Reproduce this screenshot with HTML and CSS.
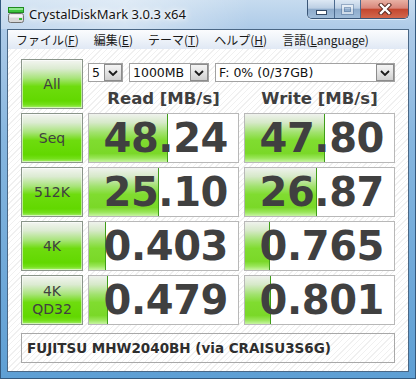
FILE: index.html
```html
<!DOCTYPE html>
<html>
<head>
<meta charset="utf-8">
<link rel="stylesheet" href="styles.css">
</head>
<body>
<div class="window">
  <div class="titlebar">
    <svg class="appicon" width="16" height="16" viewBox="0 0 16 16">
      <rect x="0.5" y="0.5" width="15" height="5" fill="#3cc43c" stroke="#1f8a1f"/>
      <rect x="1" y="1" width="14" height="2" fill="#8fe88f"/>
      <rect x="0.5" y="6.5" width="15" height="9" rx="2" fill="#d8d8d8" stroke="#707070"/>
      <rect x="1.5" y="7.5" width="13" height="3" fill="#f4f4f4"/>
      <rect x="11" y="11" width="3" height="2" fill="#30c030"/>
    </svg>
    <span class="title">CrystalDiskMark 3.0.3 x64</span>
    <div class="caps">
      <div class="cap cap-min"><span class="min-bar"></span></div>
      <div class="cap cap-max"><span class="max-box"></span></div>
      <div class="cap cap-close">
        <svg width="14" height="12" viewBox="0 0 14 12">
          <path d="M3 2 L11 10 M11 2 L3 10" stroke="#5a2a22" stroke-width="4.4" stroke-linecap="square"/>
          <path d="M3 2 L11 10 M11 2 L3 10" stroke="#ffffff" stroke-width="2.4" stroke-linecap="square"/>
        </svg>
      </div>
    </div>
  </div>
  <div class="client">
    <div class="menubar">
      <span class="mi">ファイル(<u>F</u>)</span>
      <span class="mi">編集(<u>E</u>)</span>
      <span class="mi">テーマ(<u>T</u>)</span>
      <span class="mi">ヘルプ(<u>H</u>)</span>
      <span class="mi">言語(<u>L</u>anguage)</span>
    </div>
    <div class="content">
      <div class="grid">
        <div class="btn">All</div>
        <div class="hdr">
          <div class="sels">
            <div class="sel sel-n"><span class="sv">5</span><span class="arr"><svg width="10" height="6" viewBox="0 0 10 6"><path d="M1 1 L5 5 L9 1" fill="none" stroke="#1a1a1a" stroke-width="1.8"/></svg></span></div>
            <div class="sel sel-s"><span class="sv">1000MB</span><span class="arr"><svg width="10" height="6" viewBox="0 0 10 6"><path d="M1 1 L5 5 L9 1" fill="none" stroke="#1a1a1a" stroke-width="1.8"/></svg></span></div>
            <div class="sel sel-d"><span class="sv">F: 0% (0/37GB)</span><span class="arr"><svg width="10" height="6" viewBox="0 0 10 6"><path d="M1 1 L5 5 L9 1" fill="none" stroke="#1a1a1a" stroke-width="1.8"/></svg></span></div>
          </div>
          <div class="h">Read [MB/s]</div>
          <div class="h">Write [MB/s]</div>
        </div>

        <div class="btn">Seq</div>
        <div class="res"><div class="bar" style="width:79px"></div><span class="num">48.24</span></div>
        <div class="res"><div class="bar" style="width:80px"></div><span class="num">47.80</span></div>

        <div class="btn">512K</div>
        <div class="res"><div class="bar" style="width:70px"></div><span class="num">25.10</span></div>
        <div class="res"><div class="bar" style="width:72px"></div><span class="num">26.87</span></div>

        <div class="btn">4K</div>
        <div class="res"><div class="bar" style="width:17px"></div><span class="num">0.403</span></div>
        <div class="res"><div class="bar" style="width:25px"></div><span class="num">0.765</span></div>

        <div class="btn btn2">4K<br>QD32</div>
        <div class="res"><div class="bar" style="width:19px"></div><span class="num">0.479</span></div>
        <div class="res"><div class="bar" style="width:26px"></div><span class="num">0.801</span></div>
      </div>
      <div class="drive">FUJITSU MHW2040BH (via CRAISU3S6G)</div>
    </div>
  </div>
</div>
</body>
</html>
```

FILE: styles.css
```css
* { box-sizing: border-box; }

html, body {
  margin: 0;
  padding: 0;
}

body {
  width: 416px;
  height: 379px;
  overflow: hidden;
  font-family: "DejaVu Sans", sans-serif;
  background: #6fa8d8;
}

.window {
  width: 416px;
  height: 379px;
  display: flex;
  flex-direction: column;
  padding: 0 6px 6px 6px;
  border: 1px solid #34597e;
  border-top: none;
  background: linear-gradient(to bottom, #c6dbef 0px, #aecbe8 28px, #86b6df 140px, #5e9fd4 379px);
}

.titlebar {
  height: 29px;
  flex: none;
  display: flex;
  align-items: flex-start;
  background: linear-gradient(to right, rgba(255,255,255,0.25) 0%, rgba(255,255,255,0.45) 30%, rgba(255,255,255,0) 60%);
  margin: 0 -6px;
  padding: 0 6px;
}

.appicon {
  margin: 7px 0 0 1px;
  flex: none;
}

.title {
  margin: 5px 0 0 5px;
  font-family: "Noto Sans", "Open Sans", sans-serif;
  font-size: 13px;
  line-height: 18px;
  color: #141414;
  text-shadow: 0 0 6px #ffffff, 0 0 10px #ffffff, 0 0 3px #ffffff;
}

.caps {
  margin-left: auto;
  display: flex;
  height: 19px;
  border: 1px solid #3a5677;
  border-top: none;
  border-radius: 0 0 5px 5px;
  overflow: hidden;
  box-shadow: 0 1px 0 rgba(255,255,255,0.6);
}

.cap {
  display: flex;
  align-items: center;
  justify-content: center;
}

.cap-min {
  width: 27px;
  border-right: 1px solid #4c6a8e;
  background: linear-gradient(to bottom, #dde8f4 0%, #bccfe4 45%, #8eabcb 52%, #9fbcd9 100%);
}

.cap-max {
  width: 26px;
  border-right: 1px solid #4c6a8e;
  background: linear-gradient(to bottom, #dde8f4 0%, #bccfe4 45%, #8eabcb 52%, #9fbcd9 100%);
}

.cap-close {
  width: 47px;
  background: linear-gradient(to bottom, #e8b1a4 0%, #d8867a 45%, #c4472f 52%, #d2674d 100%);
}

.min-bar {
  width: 11px;
  height: 5px;
  margin-top: 6px;
  background: #ffffff;
  border: 1px solid #344a66;
}

.max-box {
  width: 11px;
  height: 9px;
  border: 2px solid rgba(255,255,255,0.55);
  box-shadow: 0 0 0 1px rgba(70,100,140,0.4), inset 0 0 0 1px rgba(70,100,140,0.4);
}

.client {
  flex: 1;
  display: flex;
  flex-direction: column;
  border: 1px solid #4a6785;
  background-color: #ffffff;
  background-image: repeating-linear-gradient(135deg, #ffffff 0px, #ffffff 3px, #f0f0f0 3px, #f0f0f0 4px);
}

.menubar {
  height: 19px;
  flex: none;
  display: flex;
  align-items: center;
  padding-left: 8px;
  background: linear-gradient(to bottom, #fbfcfe 0%, #eef3f9 50%, #e0e8f4 100%);
  font-family: "Noto Sans CJK JP", sans-serif;
  font-size: 12px;
  line-height: 19px;
  color: #1a1a1a;
}

.mi {
  margin-right: 15px;
  white-space: nowrap;
}

.content {
  flex: 1;
  padding: 10px 13px 0 13px;
}

.grid {
  display: grid;
  grid-template-columns: 62px 1fr 1fr;
  grid-auto-rows: 50px;
  column-gap: 5px;
  row-gap: 4px;
}

.btn {
  border: 1px solid #8a958a;
  background: linear-gradient(to bottom, #f3f5f1 0%, #dcebd2 18%, #a8e47a 38%, #6edc0e 55%, #62d800 85%, #74e01a 93%, #a8ee70 100%);
  box-shadow: inset 0 0 0 1px rgba(255,255,255,0.55);
  display: flex;
  align-items: center;
  justify-content: center;
  text-align: center;
  font-size: 14px;
  line-height: 18px;
  color: #404040;
}

.hdr {
  grid-column: 2 / 4;
  display: grid;
  grid-template-columns: 1fr 1fr;
  column-gap: 5px;
}

.sels {
  grid-column: 1 / 3;
  display: flex;
  gap: 6px;
  margin-top: 4px;
  height: 19px;
}

.sel {
  height: 19px;
  display: flex;
  align-items: stretch;
  border: 1px solid #a2a2a2;
  background: #ffffff;
  padding: 0 0 0 3px;
}

.sel-n { width: 35px; }
.sel-s { width: 80px; }
.sel-d { flex: 1; }

.sv {
  font-size: 12.5px;
  line-height: 17px;
  color: #111111;
  white-space: nowrap;
}

.arr {
  margin-left: auto;
  width: 18px;
  border: 1px solid #8c8c8c;
  background: linear-gradient(to bottom, #f4f4f4 0%, #e4e4e4 50%, #cfcfcf 100%);
  display: flex;
  align-items: center;
  justify-content: center;
}

.h {
  margin-top: 7px;
  text-align: center;
  font-weight: bold;
  font-size: 16.5px;
  line-height: 20px;
  color: #3e3e3e;
  white-space: nowrap;
}

.res {
  position: relative;
  border: 1px solid #b8b8b8;
  background: #ffffff;
  display: flex;
  align-items: center;
  justify-content: flex-end;
  padding-right: 10px;
  overflow: hidden;
}

.bar {
  position: absolute;
  left: 0;
  top: 0;
  bottom: 0;
  border-right: 1px solid #3f9d18;
  background: linear-gradient(to bottom, #eff2ed 0%, #d6e9c8 18%, #a2e270 38%, #80dc30 55%, #7ad828 82%, #9ae65a 92%, #c8f4a4 100%);
}

.num {
  position: relative;
  font-weight: bold;
  font-size: 40px;
  line-height: 48px;
  color: #404040;
  letter-spacing: -0.4px;
}

.drive {
  margin-top: 8px;
  height: 30px;
  border: 1px solid #a8a8a8;
  padding-left: 5px;
  font-weight: bold;
  font-size: 13.5px;
  line-height: 28px;
  color: #2e2e2e;
  white-space: nowrap;
}
```
